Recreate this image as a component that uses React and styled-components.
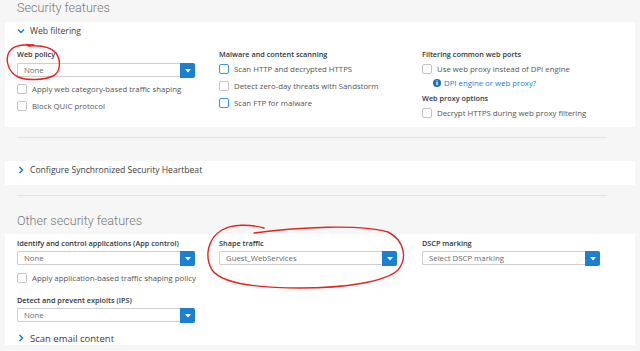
import styled, { createGlobalStyle } from 'styled-components'

const GlobalStyle = createGlobalStyle`
   html, body {
      margin: 0;
      padding: 0;
      background: #f6f6f6;
   }
   body {
      font-family: "Open Sans", "Liberation Sans", sans-serif;
      color: #333;
   }
`

const Page = styled.div`
   position: relative;
   width: 640px;
   height: 351px;
   overflow: hidden;
   padding: 0 5px;
   box-sizing: border-box;
   background: #f6f6f6;
`
const Heading = styled.h2`
   margin: 0;
   padding-left: 12px;
   height: ${p => p.$h}px;
   line-height: ${p => p.$lh}px;
   font-family: Roboto, "Open Sans", sans-serif;
   font-size: 12.6px;
   font-weight: 300;
   color: #7a7a7a;
`
const Panel = styled.section`
   background: #fff;
   padding: ${p => p.$pad};
`
const Divider = styled.hr`
   border: 0;
   border-top: 1px solid #e3e3e3;
   margin: ${p => p.$m};
   margin-left: 12px;
   margin-right: 28px;
`
const Toggle = styled.div`
   display: flex;
   align-items: center;
   gap: 5px;
   height: ${p => p.$h || 12}px;
   padding-left: 12px;
   font-size: ${p => p.$size || 8.6}px;
   color: #3c3c3c;
   margin-top: ${p => p.$mt || 0}px;
`
const Grid = styled.div`
   display: grid;
   grid-template-columns: 202px 203px 1fr;
   padding-left: 12px;
   margin-top: ${p => p.$mt || 0}px;
`
const Column = styled.div`
   display: flex;
   flex-direction: column;
`
const Label = styled.div`
   height: 12px;
   line-height: 12px;
   font-size: 7.3px;
   font-weight: 600;
   color: #30363c;
   margin-top: ${p => p.$mt || 0}px;
`
const SelectBox = styled.div`
   display: flex;
   width: 178px;
   height: 14px;
   margin-top: ${p => p.$mt || 0}px;
   border: 1px solid #cfcfcf;
   border-right: 0;
   border-radius: 2px;
   box-sizing: border-box;
   background: #fff;
`
const SelectText = styled.div`
   flex: 1;
   padding-left: 6px;
   line-height: 12px;
   font-size: 7.8px;
   color: #6a6a6a;
`
const SelectButton = styled.div`
   width: 15px;
   height: 15px;
   margin-top: -1px;
   background: #1b7fd2;
   border-radius: 0 2px 2px 0;
   display: flex;
   align-items: center;
   justify-content: center;
`
const Row = styled.label`
   display: flex;
   align-items: center;
   gap: 5px;
   height: 17px;
   margin-top: ${p => p.$mt || 0}px;
   font-size: 7.8px;
   color: #555;
`
const Box = styled.span`
   width: 10px;
   height: 10px;
   box-sizing: border-box;
   border: ${p => p.$active ? '1.3px solid #3d97dc' : '1px solid #c4c4c4'};
   border-radius: 2px;
   background: #fff;
`
const Help = styled.div`
   display: flex;
   align-items: center;
   gap: 3px;
   height: 12px;
   padding-left: 11px;
   font-size: 7.8px;
   color: #2180d3;
`
const InfoDot = styled.span`
   width: 8px;
   height: 8px;
   border-radius: 50%;
   background: #1b6fc2;
   color: #fff;
   font-size: 6px;
   font-weight: 700;
   line-height: 8px;
   text-align: center;
   font-family: "DejaVu Serif", serif;
`
const Ink = styled.svg`
   position: absolute;
   left: 0;
   top: 0;
   pointer-events: none;
`

const Chevron = ({ down }) => (
   <svg width="8" height="8" viewBox="0 0 8 8">
      {down
         ? <path d="M1 2.5 L4 5.5 L7 2.5" fill="none" stroke="#1b7fd2" strokeWidth="1.5" />
         : <path d="M2.5 1 L5.5 4 L2.5 7" fill="none" stroke="#1b7fd2" strokeWidth="1.5" />}
   </svg>
)

const Select = ({ value, mt }) => (
   <SelectBox $mt={mt}>
      <SelectText>{value}</SelectText>
      <SelectButton>
         <svg width="6" height="4" viewBox="0 0 6 4"><path d="M0 0 H6 L3 3.5 Z" fill="#fff" /></svg>
      </SelectButton>
   </SelectBox>
)

const Check = ({ text, active, mt }) => (
   <Row $mt={mt}>
      <Box $active={active} />
      {text}
   </Row>
)

export default function App() {
   return (
      <Page>
         <GlobalStyle />
         <Heading $h={22} $lh={16}>Security features</Heading>
         <Panel $pad="3px 0 6px">
            <Toggle><Chevron down />Web filtering</Toggle>
            <Grid $mt={11}>
               <Column>
                  <Label>Web policy</Label>
                  <Select value="None" mt={3} />
                  <Check text="Apply web category-based traffic shaping" mt={3} />
                  <Check text="Block QUIC protocol" />
               </Column>
               <Column>
                  <Label>Malware and content scanning</Label>
                  <Check text="Scan HTTP and decrypted HTTPS" active />
                  <Check text="Detect zero-day threats with Sandstorm" />
                  <Check text="Scan FTP for malware" active />
               </Column>
               <Column>
                  <Label>Filtering common web ports</Label>
                  <Check text="Use web proxy instead of DPI engine" />
                  <Help><InfoDot>i</InfoDot>DPI engine or web proxy?</Help>
                  <Label $mt={3}>Web proxy options</Label>
                  <Check text="Decrypt HTTPS during web proxy filtering" />
               </Column>
            </Grid>
         </Panel>
         <Divider $m="10px 0 23px" />
         <Panel $pad="3px 0 9px">
            <Toggle><Chevron />Configure Synchronized Security Heartbeat</Toggle>
         </Panel>
         <Divider $m="10px 0 0" />
         <Heading $h={38} $lh={49}>Other security features</Heading>
         <Panel $pad="3px 0 0">
            <Grid>
               <Column>
                  <Label>Identify and control applications (App control)</Label>
                  <Select value="None" mt={2} />
                  <Check text="Apply application-based traffic shaping policy" mt={4} />
                  <Label $mt={8}>Detect and prevent exploits (IPS)</Label>
                  <Select value="None" mt={2} />
               </Column>
               <Column>
                  <Label>Shape traffic</Label>
                  <Select value="Guest_WebServices" mt={2} />
               </Column>
               <Column>
                  <Label>DSCP marking</Label>
                  <Select value="Select DSCP marking" mt={2} />
               </Column>
            </Grid>
            <Toggle $h={14} $mt={9} $size={9.5}><Chevron />Scan email content</Toggle>
         </Panel>
         <Ink width="640" height="351" viewBox="0 0 640 351">
            <path
               d="M34 45 C22 44 12 46 9 52 C5 60 8 72 18 77 C28 81 44 80 53 76 C61 72 61 60 56 53 C51 47 40 45 28 46"
               fill="none" stroke="#e8221c" strokeWidth="1.4" strokeLinecap="round" />
            <path
               d="M264 228 C250 224 232 224 222 230 C208 238 204 256 212 270 C222 284 256 288 300 288 C345 288 385 282 398 270 C408 258 404 240 388 232 C360 224 300 227 254 233"
               fill="none" stroke="#e8221c" strokeWidth="1.4" strokeLinecap="round" />
         </Ink>
      </Page>
   )
}
